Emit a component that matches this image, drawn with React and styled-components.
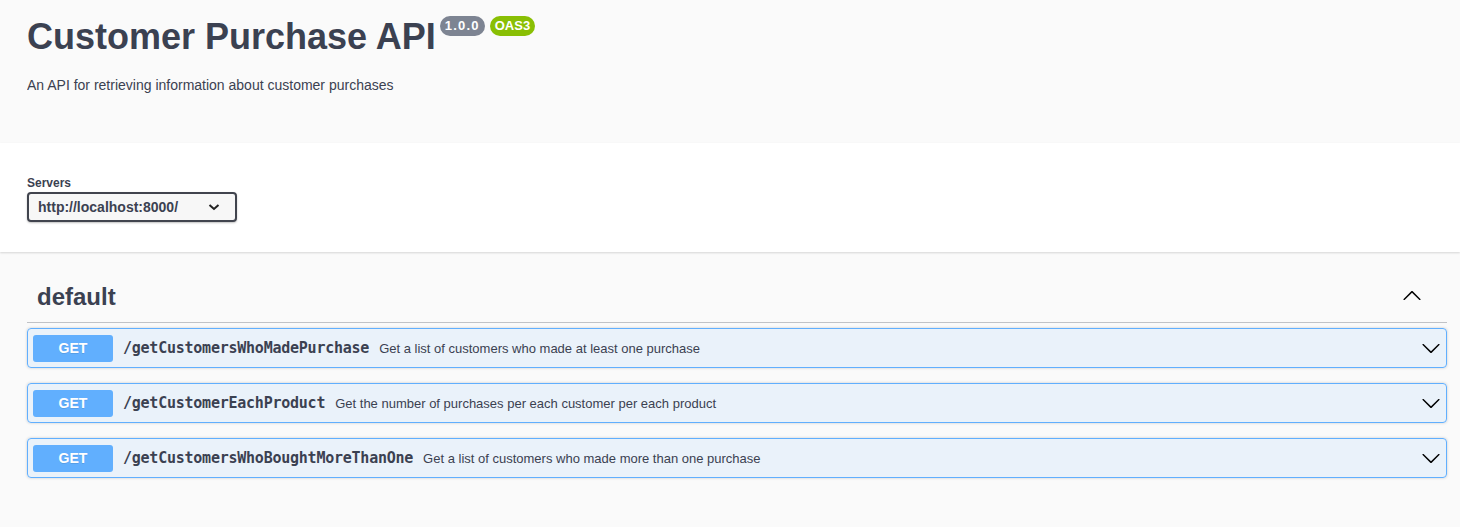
import React from "react";
import styled, { createGlobalStyle } from "styled-components";

const GlobalStyle = createGlobalStyle`
  html, body {
    margin: 0;
    padding: 0;
    background: #fafafa;
    font-family: "Liberation Sans", Arial, sans-serif;
    color: #3b4151;
  }
`;

const Wrapper = styled.div`
  box-sizing: border-box;
  width: 100%;
  max-width: 1460px;
  padding: 0 13px 0 27px;
`;

const InfoSection = styled.div`
  height: 143px;
  overflow: hidden;
`;

const Title = styled.h2`
  display: flex;
  align-items: flex-start;
  margin: 17px 0 0;
  font-size: 36px;
  line-height: 40px;
  font-weight: 700;
  color: #3b4151;
`;

const Badge = styled.span`
  display: inline-block;
  margin-top: -1px;
  margin-left: ${(p) => p.$gap}px;
  padding: 0 5px;
  height: 20px;
  line-height: 20px;
  border-radius: 57px;
  background: ${(p) => p.$color};
  color: #fff;
  font-size: 13px;
  font-weight: 700;
  letter-spacing: ${(p) => (p.$wide ? "1.2px" : "0")};
`;

const Description = styled.p`
  margin: 18px 0 0;
  font-size: 14px;
  line-height: 20px;
`;

const SchemeContainer = styled.div`
  background: #fff;
  box-shadow: 0 1px 2px 0 rgba(0, 0, 0, 0.15);
  padding: 32px 0 30px;
`;

const Label = styled.div`
  font-size: 12px;
  line-height: 16px;
  font-weight: 700;
  margin-bottom: 1px;
`;

const Select = styled.div`
  box-sizing: border-box;
  width: 210px;
  height: 30px;
  display: flex;
  align-items: center;
  justify-content: space-between;
  padding: 0 15px 0 9px;
  border: 2px solid #41444e;
  border-radius: 4px;
  background: #f7f7f7;
  box-shadow: 0 1px 2px 0 rgba(0, 0, 0, 0.25);
  font-size: 14px;
  font-weight: 700;
  color: #3b4151;
`;

const TagSection = styled.div`
  margin-top: 20px;
`;

const TagHeader = styled.div`
  display: flex;
  align-items: center;
  justify-content: space-between;
  padding: 10px 25px 10px 10px;
  margin-bottom: 5px;
  border-bottom: 1px solid rgba(59, 65, 81, 0.3);
  font-size: 24px;
  line-height: 30px;
  font-weight: 700;
  svg {
    margin-bottom: 4px;
  }
`;

const Opblock = styled.div`
  box-sizing: border-box;
  height: 40px;
  margin-bottom: 15px;
  display: flex;
  align-items: center;
  padding: 0 5px;
  border: 1px solid #61affe;
  border-radius: 4px;
  background: rgba(97, 175, 254, 0.1);
  box-shadow: 0 0 3px rgba(0, 0, 0, 0.19);
`;

const Method = styled.span`
  width: 80px;
  height: 27px;
  line-height: 27px;
  text-align: center;
  border-radius: 3px;
  background: #61affe;
  color: #fff;
  font-size: 14px;
  font-weight: 700;
  text-shadow: 0 1px 0 rgba(0, 0, 0, 0.1);
`;

const Path = styled.span`
  padding: 0 10px;
  font-family: "DejaVu Sans Mono", "Liberation Mono", monospace;
  font-size: 15px;
  letter-spacing: -0.24px;
  font-weight: 700;
  color: #3b4151;
`;

const Summary = styled.span`
  flex: 1;
  font-size: 13px;
  color: #3b4151;
`;

const ArrowDown = ({ size = 20 }) => (
  <svg width={size} height={size} viewBox="0 0 20 20" fill="#000">
    <path d="M17.418 6.109c.272-.268.709-.268.979 0s.271.701 0 .969l-7.908 7.83c-.27.268-.707.268-.979 0l-7.908-7.83c-.27-.268-.27-.701 0-.969.271-.268.709-.268.979 0L10 13.25l7.418-7.141z" />
  </svg>
);

const ArrowUp = () => (
  <svg width="20" height="20" viewBox="0 0 20 20" fill="#000">
    <path d="M17.418 14.908c.272.268.709.268.979 0s.271-.701 0-.969l-7.908-7.83c-.27-.268-.707-.268-.979 0l-7.908 7.83c-.27.268-.27.701 0 .969.271.268.709.268.979 0L10 7.767l7.418 7.141z" />
  </svg>
);

const SmallChevron = () => (
  <svg width="12" height="8" viewBox="0 0 12 8" fill="none" stroke="#222" strokeWidth="2">
    <path d="M1.5 2l4.5 4 4.5-4" />
  </svg>
);

const operations = [
  { path: "/getCustomersWhoMadePurchase", summary: "Get a list of customers who made at least one purchase" },
  { path: "/getCustomerEachProduct", summary: "Get the number of purchases per each customer per each product" },
  { path: "/getCustomersWhoBoughtMoreThanOne", summary: "Get a list of customers who made more than one purchase" },
];

export default function App() {
  return (
    <>
      <GlobalStyle />
      <Wrapper>
        <InfoSection>
          <Title>
            Customer Purchase API
            <Badge $color="#7d8492" $gap={4} $wide>1.0.0</Badge>
            <Badge $color="#89bf04" $gap={5}>OAS3</Badge>
          </Title>
          <Description>An API for retrieving information about customer purchases</Description>
        </InfoSection>
      </Wrapper>
      <SchemeContainer>
        <Wrapper>
          <Label>Servers</Label>
          <Select>
            <span>http://localhost:8000/</span>
            <SmallChevron />
          </Select>
        </Wrapper>
      </SchemeContainer>
      <Wrapper>
        <TagSection>
          <TagHeader>
            <span>default</span>
            <ArrowUp />
          </TagHeader>
          {operations.map((op) => (
            <Opblock key={op.path}>
              <Method>GET</Method>
              <Path>{op.path}</Path>
              <Summary>{op.summary}</Summary>
              <ArrowDown />
            </Opblock>
          ))}
        </TagSection>
      </Wrapper>
    </>
  );
}
